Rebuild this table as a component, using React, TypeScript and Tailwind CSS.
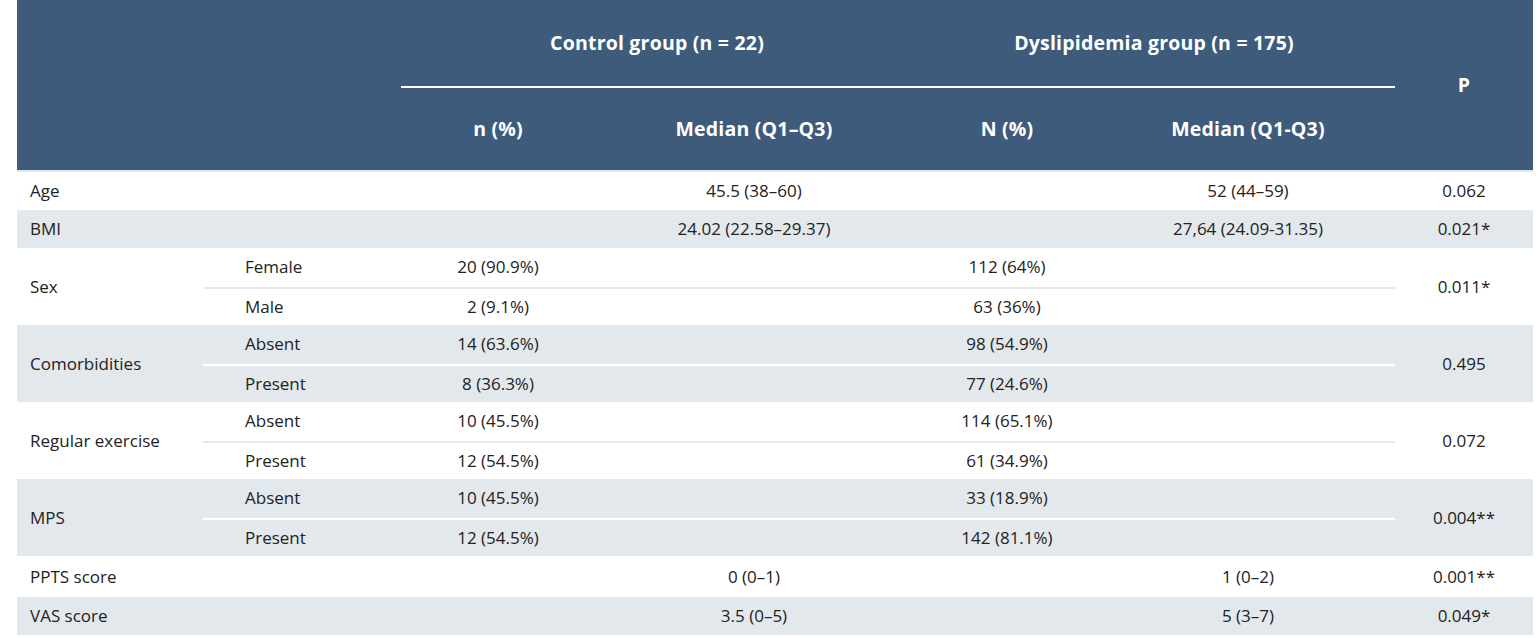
import React from "react";

type Sub = { label: string; c1: string; c2: string; d1: string; d2: string };
type Group = { label: string; p: string; grey: boolean; subs?: Sub[]; c2?: string; d2?: string; h?: string };

const groups: Group[] = [
  { label: "Age", p: "0.062", grey: false, c2: "45.5 (38–60)", d2: "52 (44–59)", h: "h-[38px]" },
  { label: "BMI", p: "0.021*", grey: true, c2: "24.02 (22.58–29.37)", d2: "27,64 (24.09-31.35)", h: "h-[38px]" },
  {
    label: "Sex", p: "0.011*", grey: false,
    subs: [
      { label: "Female", c1: "20 (90.9%)", c2: "", d1: "112 (64%)", d2: "" },
      { label: "Male", c1: "2 (9.1%)", c2: "", d1: "63 (36%)", d2: "" },
    ],
  },
  {
    label: "Comorbidities", p: "0.495", grey: true,
    subs: [
      { label: "Absent", c1: "14 (63.6%)", c2: "", d1: "98 (54.9%)", d2: "" },
      { label: "Present", c1: "8 (36.3%)", c2: "", d1: "77 (24.6%)", d2: "" },
    ],
  },
  {
    label: "Regular exercise", p: "0.072", grey: false,
    subs: [
      { label: "Absent", c1: "10 (45.5%)", c2: "", d1: "114 (65.1%)", d2: "" },
      { label: "Present", c1: "12 (54.5%)", c2: "", d1: "61 (34.9%)", d2: "" },
    ],
  },
  {
    label: "MPS", p: "0.004**", grey: true,
    subs: [
      { label: "Absent", c1: "10 (45.5%)", c2: "", d1: "33 (18.9%)", d2: "" },
      { label: "Present", c1: "12 (54.5%)", c2: "", d1: "142 (81.1%)", d2: "" },
    ],
  },
  { label: "PPTS score", p: "0.001**", grey: false, c2: "0 (0–1)", d2: "1 (0–2)", h: "h-[41px]" },
  { label: "VAS score", p: "0.049*", grey: true, c2: "3.5 (0–5)", d2: "5 (3–7)", h: "h-[38px]" },
];

function SubRow({ s, grey, first }: { s: Sub; grey: boolean; first: boolean }) {
  const border = first ? "" : grey ? "border-t-2 border-white" : "border-t-2 border-[#e3e8ec]";
  return (
    <div className={`flex h-[38.5px] items-center ${border}`}>
      <div className="w-[198px] pl-[42px]">{s.label}</div>
      <div className="w-[194px] text-center">{s.c1}</div>
      <div className="w-[318px] text-center">{s.c2}</div>
      <div className="w-[188px] text-center">{s.d1}</div>
      <div className="w-[294px] text-center">{s.d2}</div>
    </div>
  );
}

export default function App() {
  return (
    <div
      className="min-h-[638px] w-[1538px] bg-white pl-[17px] text-[17px] leading-[22px] text-[#222222]"
      style={{ fontFamily: "'Open Sans', 'Noto Sans', sans-serif" }}
    >
      <div className="w-[1516px]">
        {/* Header */}
        <div className="flex h-[170px] bg-[#3e5b7b] text-[19.5px] font-bold tracking-[0.2px] text-white">
          <div className="w-[384px]" />
          <div className="flex w-[994px] flex-col">
            <div className="flex h-[86px] items-center">
              <div className="w-[512px] text-center">Control group (n = 22)</div>
              <div className="w-[482px] text-center">Dyslipidemia group (n = 175)</div>
            </div>
            <div className="h-[2px] bg-white" />
            <div className="flex h-[82px] items-center">
              <div className="w-[194px] text-center">n (%)</div>
              <div className="w-[318px] text-center">Median (Q1–Q3)</div>
              <div className="w-[188px] text-center">N (%)</div>
              <div className="w-[294px] text-center">Median (Q1-Q3)</div>
            </div>
          </div>
          <div className="flex w-[138px] items-center justify-center">P</div>
        </div>
        <div className="h-[2px] bg-[#e3e8ec]" />

        {/* Body */}
        {groups.map((g) => (
          <div key={g.label} className={`flex ${g.grey ? "bg-[#e3e8ec]" : "bg-white"}`}>
            {g.subs ? (
              <>
                <div className="flex w-[186px] items-center pl-[13px]">{g.label}</div>
                <div className="flex w-[1192px] flex-col">
                  {g.subs.map((s, i) => (
                    <SubRow key={i} s={s} grey={g.grey} first={i === 0} />
                  ))}
                </div>
              </>
            ) : (
              <div className={`flex w-[1378px] items-center ${g.h}`}>
                <div className="w-[384px] pl-[13px]">{g.label}</div>
                <div className="w-[194px]" />
                <div className="w-[318px] text-center">{g.c2}</div>
                <div className="w-[188px]" />
                <div className="w-[294px] text-center">{g.d2}</div>
              </div>
            )}
            <div className="flex w-[138px] items-center justify-center">{g.p}</div>
          </div>
        ))}
      </div>
    </div>
  );
}
